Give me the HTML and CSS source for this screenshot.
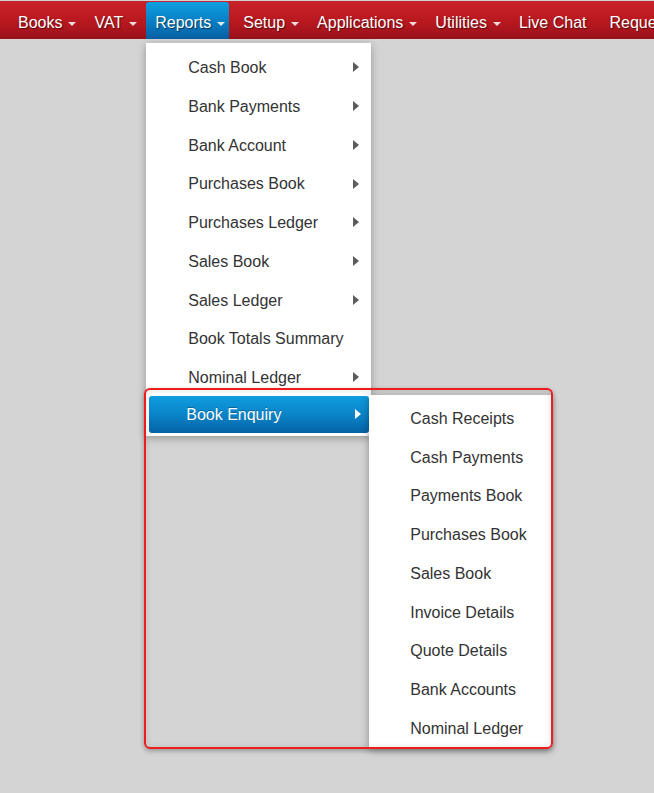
FILE: index.html
```html
<!DOCTYPE html>
<html lang="en">
<head>
    <meta charset="UTF-8">
    <title>Reports - Book Enquiry</title>
    <link rel="stylesheet" href="styles.css">
</head>
<body>

<nav class="navbar">
    <ul class="nav">
        <li class="nav-item"><a href="#">Books<span class="caret"></span></a></li>
        <li class="nav-item"><a href="#">VAT<span class="caret"></span></a></li>
        <li class="nav-item active">
            <a href="#">Reports<span class="caret"></span></a>
            <ul class="dropdown">
                <li class="has-sub"><a href="#">Cash Book</a></li>
                <li class="has-sub"><a href="#">Bank Payments</a></li>
                <li class="has-sub"><a href="#">Bank Account</a></li>
                <li class="has-sub"><a href="#">Purchases Book</a></li>
                <li class="has-sub"><a href="#">Purchases Ledger</a></li>
                <li class="has-sub"><a href="#">Sales Book</a></li>
                <li class="has-sub"><a href="#">Sales Ledger</a></li>
                <li><a href="#">Book Totals Summary</a></li>
                <li class="has-sub"><a href="#">Nominal Ledger</a></li>
                <li class="has-sub open">
                    <a href="#">Book Enquiry</a>
                    <ul class="dropdown submenu">
                        <li><a href="#">Cash Receipts</a></li>
                        <li><a href="#">Cash Payments</a></li>
                        <li><a href="#">Payments Book</a></li>
                        <li><a href="#">Purchases Book</a></li>
                        <li><a href="#">Sales Book</a></li>
                        <li><a href="#">Invoice Details</a></li>
                        <li><a href="#">Quote Details</a></li>
                        <li><a href="#">Bank Accounts</a></li>
                        <li><a href="#">Nominal Ledger</a></li>
                    </ul>
                </li>
            </ul>
        </li>
        <li class="nav-item"><a href="#">Setup<span class="caret"></span></a></li>
        <li class="nav-item"><a href="#">Applications<span class="caret"></span></a></li>
        <li class="nav-item"><a href="#">Utilities<span class="caret"></span></a></li>
        <li class="nav-item wide"><a href="#">Live Chat</a></li>
        <li class="nav-item"><a href="#">Request Support</a></li>
    </ul>
</nav>

<!-- annotation frame drawn over the submenu -->
<div class="highlight-box"></div>

</body>
</html>
```

FILE: styles.css
```css
html, body {
    overflow: hidden;
}
body {
    margin: 0;
    padding-top: 1px;
    height: 792px;
    font-family: "Liberation Sans", Arial, sans-serif;
    font-size: 16px;
    background-color: #d4d4d4;
    position: relative;
}
a {
    text-decoration: none;
}
ul {
    list-style: none;
    margin: 0;
    padding: 0;
}
.navbar {
    height: 38px;
    background: linear-gradient(to bottom, #c9222b 0%, #b8181f 55%, #99111a 100%);
}
.nav {
    display: flex;
    flex-wrap: nowrap;
    padding-left: 9px;
    white-space: nowrap;
}
.nav-item {
    position: relative;
}
.nav-item > a {
    display: block;
    margin-top: 1px;
    padding: 4px 9px 0 9px;
    line-height: 33px;
    color: #fff;
    text-shadow: 1px 1px 1px rgba(0, 0, 0, 0.55);
}
.nav-item.wide > a {
    padding-right: 14px;
}
.nav-item.active > a {
    padding-right: 4px;
    margin-right: 5px;
    border-radius: 3px 3px 0 0;
    background: linear-gradient(to bottom, #0f9fe1 0%, #0880c6 50%, #065fa2 100%);
}
.caret {
    display: inline-block;
    width: 0;
    height: 0;
    margin-left: 6px;
    vertical-align: middle;
    border-top: 4px solid #fff;
    border-left: 4px solid transparent;
    border-right: 4px solid transparent;
    opacity: 0.85;
}
.dropdown {
    position: absolute;
    left: 0;
    top: 42px;
    width: 225px;
    padding: 5px 0 3px 0;
    background: #fff;
    box-shadow: 0 2px 8px rgba(0, 0, 0, 0.3);
    z-index: 10;
}
.dropdown li {
    position: relative;
}
.dropdown li > a {
    display: block;
    padding: 11px 0 9px 42px;
    line-height: 18.75px;
    color: #333;
}
.has-sub > a::after {
    content: "";
    position: absolute;
    right: 12px;
    top: 50%;
    margin-top: -5px;
    border-left: 6px solid #5c5c5c;
    border-top: 5px solid transparent;
    border-bottom: 5px solid transparent;
}
.dropdown li.open {
    margin-top: -1px;
}
.dropdown li.open > a {
    margin: 0 2px 0 3px;
    padding: 10px 0 8px 37px;
    border-radius: 3px;
    color: #fff;
    text-shadow: 0 -1px 0 rgba(0, 0, 0, 0.3);
    background: linear-gradient(to bottom, #0e9ddf 0%, #0a84c9 50%, #0663a5 100%);
}
.dropdown li.open > a::after {
    right: 10px;
    border-left-color: #fff;
}
.submenu {
    left: 223px;
    top: -1px;
    width: 182px;
    padding: 4px 0 0 0;
    box-shadow: 0 2px 8px rgba(0, 0, 0, 0.35);
}
.submenu li > a {
    padding-left: 41px;
}
.highlight-box {
    position: absolute;
    left: 144px;
    top: 388px;
    width: 409px;
    height: 361px;
    box-sizing: border-box;
    border: 2px solid #ee1c1c;
    border-radius: 6px;
    box-shadow: 0 2px 5px rgba(0, 0, 0, 0.3), inset 0 0 6px rgba(0, 0, 0, 0.12);
    pointer-events: none;
    z-index: 20;
}
```
